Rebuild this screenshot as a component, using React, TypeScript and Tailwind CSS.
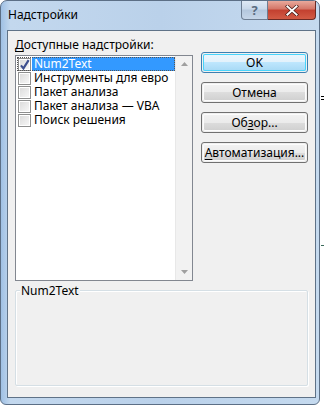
import React from 'react';

const ITEMS = [
  { name: 'Num2Text', checked: true },
  { name: 'Инструменты для евро', checked: false },
  { name: 'Пакет анализа', checked: false },
  { name: 'Пакет анализа — VBA', checked: false },
  { name: 'Поиск решения', checked: false },
];

const font = { fontFamily: '"Noto Sans", "Open Sans", sans-serif' };

function CheckBox({ checked }: { checked: boolean }) {
  return (
    <div className="w-[13px] h-[13px] border border-[#8e8f8f] bg-white p-[1px] shrink-0">
      <div className="relative w-full h-full bg-gradient-to-br from-[#dcdcdc] to-[#f6f6f6]">
        {checked && (
          <svg viewBox="0 0 11 11" className="absolute -left-[2px] -top-[2px] w-[13px] h-[13px]">
            <path d="M2.5 6.2 L4.6 8.8 L9 1.8" fill="none" stroke="#3d4f8f" strokeWidth="1.8" />
          </svg>
        )}
      </div>
    </div>
  );
}

function Button({ children, primary }: { children: React.ReactNode; primary?: boolean }) {
  return (
    <div
      className={`h-[21px] rounded-[3px] border ${
        primary ? 'border-[#3c7fb1]' : 'border-[#707070]'
      } p-[1px]`}
    >
      <div
        className={`h-full rounded-[2px] flex items-center justify-center text-[12px] text-black ${
          primary
            ? 'bg-[linear-gradient(#eaf6fd_0%,#e3f1fb_50%,#bee6fd_50%,#a7d9f5_100%)] shadow-[inset_0_0_0_1px_#48d4fb]'
            : 'bg-[linear-gradient(#f2f2f2_0%,#ebebeb_50%,#dddddd_50%,#cfcfcf_100%)] shadow-[inset_0_0_0_1px_#fcfcfc]'
        }`}
      >
        {children}
      </div>
    </div>
  );
}

export default function App() {
  return (
    <div className="w-[324px] h-[405px] bg-white relative overflow-hidden" style={font}>
      {/* excel bits behind the dialog */}
      <div className="absolute right-0 top-[96px] w-[3px] h-[1px] bg-black" />
      <div className="absolute right-0 top-[99px] w-[3px] h-[1px] bg-black" />
      <div className="absolute right-0 top-[245px] w-[3px] h-[1px] bg-[#3a6a5a]" />

      <div className="w-[320px] h-[405px] rounded-t-[7px] rounded-b-[6px] border border-[#5c6f86] bg-[linear-gradient(90deg,#9fc0e4_0%,#c3d8ee_3%,#bad1ea_50%,#c5daef_100%)] flex flex-col">
        {/* title bar */}
        <div className="h-[29px] flex items-start relative">
          <div className="pl-[7px] pt-[6px] text-[12px] text-black leading-[16px]">Надстройки</div>
          <div className="ml-auto flex mr-[3px]">
            <div className="w-[27px] h-[19px] rounded-bl-[4px] border border-t-0 border-[#6d7d92] bg-[linear-gradient(#dfe9f5_0%,#c9d8ea_45%,#b4c7dd_50%,#c6d6e9_100%)] flex items-center justify-center text-[13px] font-bold text-[#5a6b80] leading-none">
              ?
            </div>
            <div className="w-[48px] h-[19px] rounded-br-[4px] border border-t-0 border-l-0 border-[#6b2a24] bg-[linear-gradient(#e9a99c_0%,#d47566_45%,#c2402f_50%,#d25b45_100%)] flex items-center justify-center">
              <svg viewBox="0 0 14 12" className="w-[14px] h-[11px]">
                <path d="M2 1.5 L12 10.5 M12 1.5 L2 10.5" stroke="#3b1410" strokeWidth="3.6" strokeLinecap="square" />
                <path d="M2 1.5 L12 10.5 M12 1.5 L2 10.5" stroke="#ffffff" strokeWidth="2.2" strokeLinecap="square" />
              </svg>
            </div>
          </div>
        </div>

        {/* client area */}
        <div className="ml-[6px] mr-[3px] h-[368px] border border-[#5f7287] bg-[#f0f0f0] flex flex-col px-[7px] pt-[6px]">
          <div className="flex">
            <div className="w-[178px] flex flex-col">
              <div className="text-[12px] leading-[16px] text-black h-[17px]">
                <span className="underline underline-offset-2">Д</span>оступные надстройки:
              </div>
              <div className="mt-[1px] h-[226px] border border-[#828790] bg-white flex">
                <div className="flex-1 pt-[1px] pl-[1px]">
                  {ITEMS.map((it, i) => (
                    <div
                      key={it.name}
                      className={`h-[14px] flex items-center ${
                        i === 0 ? 'outline-1 outline-dotted outline-[#555] -outline-offset-1' : ''
                      }`}
                    >
                      <div className="pl-[1px]">
                        <CheckBox checked={it.checked} />
                      </div>
                      <div
                        className={`h-[14px] flex items-center text-[12px] leading-[14px] pl-[2px] pr-[2px] ml-[1px] flex-1 ${
                          i === 0 ? 'bg-[#3399ff] text-white' : 'text-black'
                        }`}
                      >
                        {it.name}
                      </div>
                    </div>
                  ))}
                </div>
                <div className="w-[17px] bg-[#f2f2f2] border-l border-[#e8e8e8] flex flex-col justify-between items-center py-[6px]">
                  <svg viewBox="0 0 7 4" className="w-[7px] h-[4px]">
                    <path d="M0 4 L3.5 0 L7 4 Z" fill="#a0a0a0" />
                  </svg>
                  <svg viewBox="0 0 7 4" className="w-[7px] h-[4px]">
                    <path d="M0 0 L3.5 4 L7 0 Z" fill="#a0a0a0" />
                  </svg>
                </div>
              </div>
            </div>
            <div className="ml-auto w-[107px] pt-[15px] flex flex-col gap-[9px]">
              <Button primary>OK</Button>
              <Button>Отмена</Button>
              <Button>
                Об<span className="underline underline-offset-2">з</span>ор...
              </Button>
              <Button>
                <span className="underline underline-offset-2">А</span>втоматизация...
              </Button>
            </div>
          </div>

          {/* description group */}
          <div className="relative mt-[9px] h-[96px] border border-[#d5dfe5] rounded-[2px] shadow-[inset_1px_1px_0_#ffffff,1px_1px_0_#ffffff]">
            <div className="absolute left-[4px] -top-[7px] text-[12px] leading-[14px] text-black bg-[#f0f0f0] px-[1px]">
              Num2Text
            </div>
          </div>
        </div>
      </div>
    </div>
  );
}
